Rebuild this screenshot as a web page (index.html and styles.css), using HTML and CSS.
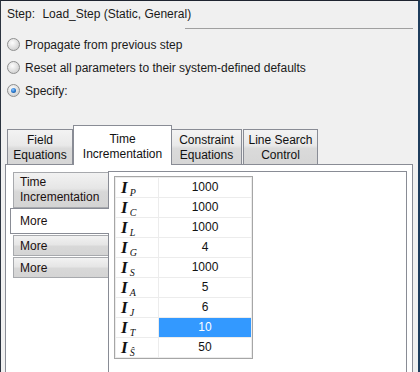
FILE: index.html
```html
<!DOCTYPE html>
<html lang="en">
<head>
    <meta charset="UTF-8">
    <title>Edit Step</title>
    <link rel="stylesheet" href="styles.css">
</head>
<body>
    <div class="window">
        <div class="step-row">
            <span class="step-label">Step:</span>
            <span>Load_Step (Static, General)</span>
        </div>
        <div class="rule"></div>

        <div class="options">
            <label class="option"><span class="radio"></span>Propagate from previous step</label>
            <label class="option"><span class="radio"></span>Reset all parameters to their system-defined defaults</label>
            <label class="option"><span class="radio checked"></span>Specify:</label>
        </div>

        <div class="tabs">
            <div class="tab tab-field">Field<br>Equations</div>
            <div class="tab tab-time active">Time<br>Incrementation</div>
            <div class="tab tab-constraint">Constraint<br>Equations</div>
            <div class="tab tab-search">Line Search<br>Control</div>
        </div>

        <div class="panel">
            <div class="side-tabs">
                <div class="side-tab tall">Time<br>Incrementation</div>
                <div class="side-tab active">More</div>
                <div class="side-tab">More</div>
                <div class="side-tab">More</div>
            </div>
            <div class="inner">
                <div class="params">
                    <div class="sym"><i>I</i><sub>P</sub></div><div class="val">1000</div>
                    <div class="sym"><i>I</i><sub>C</sub></div><div class="val">1000</div>
                    <div class="sym"><i>I</i><sub>L</sub></div><div class="val">1000</div>
                    <div class="sym"><i>I</i><sub>G</sub></div><div class="val">4</div>
                    <div class="sym"><i>I</i><sub>S</sub></div><div class="val">1000</div>
                    <div class="sym"><i>I</i><sub>A</sub></div><div class="val">5</div>
                    <div class="sym"><i>I</i><sub>J</sub></div><div class="val">6</div>
                    <div class="sym"><i>I</i><sub>T</sub></div><div class="val selected">10</div>
                    <div class="sym"><i>I</i><sub>Ŝ</sub></div><div class="val">50</div>
                </div>
            </div>
        </div>
    </div>
</body>
</html>
```

FILE: styles.css
```css
body {
    margin: 0;
    background: #f0f0f0;
    font-family: "Liberation Sans", Arial, sans-serif;
    font-size: 12px;
    color: #1a1a1a;
    overflow: hidden;
}
.window {
    width: 417px;
    height: 371px;
    border-top: 1px solid #1e2430;
    border-left: 1px solid #2c3440;
    border-right: 2px solid #1d3c5c;
    overflow: hidden;
    display: flex;
    flex-direction: column;
}
.step-row {
    height: 27px;
    line-height: 27px;
    padding-left: 6px;
}
.step-label {
    margin-right: 4px;
}
.rule {
    height: 1px;
    background: #a0a0a0;
    margin: 0 5px 0 184px;
}
.options {
    padding-top: 4px;
}
.option {
    display: flex;
    align-items: center;
    height: 23px;
    padding-left: 6px;
}
.radio {
    position: relative;
    width: 11px;
    height: 11px;
    border: 1px solid #8e8f8f;
    border-radius: 50%;
    background: radial-gradient(circle at 40% 35%, #fdfdfd 0%, #e4e4e4 45%, #cfcfcf 80%, #e9e9e9 100%);
    margin-right: 5px;
}
.radio.checked::after {
    content: "";
    position: absolute;
    left: 3px;
    top: 3px;
    width: 5px;
    height: 5px;
    border-radius: 50%;
    background: radial-gradient(circle at 40% 35%, #8cc4ff 0%, #2a7bd1 50%, #0b3f7a 100%);
}
.tabs {
    display: flex;
    align-items: flex-end;
    height: 39px;
    margin-top: 23px;
    padding-left: 6px;
}
.tab {
    height: 31px;
    padding-top: 3px;
    box-sizing: content-box;
    border: 1px solid #898c95;
    border-bottom: none;
    background: linear-gradient(#f3f3f3, #e9e9e9 45%, #dadada 55%, #d6d6d6);
    text-align: center;
    line-height: 15px;
    color: #111;
}
.tab-field {
    width: 64px;
}
.tab-time {
    width: 97px;
}
.tab-constraint {
    width: 69px;
    border-left: none;
}
.tab-search {
    width: 73px;
    margin-left: 1px;
}
.tab.active {
    height: 33px;
    padding-top: 6px;
    background: #fff;
    margin-bottom: -1px;
    position: relative;
    z-index: 1;
}
.panel {
    flex: 1;
    margin: 0 5px 0 4px;
    border: 1px solid #898c95;
    border-bottom: none;
    background: #fff;
    display: flex;
    padding: 6px 5px 0 7px;
}
.side-tabs {
    width: 95px;
    padding-top: 1px;
}
.side-tab {
    height: 19px;
    line-height: 20px;
    padding-left: 6px;
    border: 1px solid #a7a9ad;
    border-right: none;
    background: linear-gradient(#f2f2f2, #e6e6e6 45%, #d8d8d8 55%, #d4d4d4);
    margin-top: 1px;
    color: #1a1010;
}
.side-tab.tall {
    height: 34px;
    line-height: 15px;
    padding-top: 0;
    display: flex;
    flex-direction: column;
    justify-content: center;
    margin-top: 0;
}
.side-tab.active {
    height: 24px;
    line-height: 25px;
    margin: 0 -1px 0 -3px;
    padding-left: 9px;
    background: #fff;
    border-color: #898c95;
    position: relative;
    z-index: 1;
}
.inner {
    flex: 1;
    border: 1px solid #898c95;
    border-bottom: none;
    background: #fff;
    padding: 4px 0 0 5px;
}
.params {
    display: grid;
    grid-template-columns: 42px 92px;
    grid-auto-rows: 19px;
    gap: 1px;
    padding: 1px;
    width: 135px;
    border: 1px solid #a6a6a6;
    background: #ececec;
}
.sym, .val {
    background: #fff;
}
.sym {
    padding-left: 5px;
    font-family: "Liberation Serif", "Times New Roman", serif;
    color: #111;
    white-space: nowrap;
}
.sym i {
    font-size: 17px;
    font-weight: bold;
    line-height: 19px;
}
.sym sub {
    font-style: italic;
    font-size: 10px;
    vertical-align: -3px;
    margin-left: 2px;
}
.val {
    text-align: center;
    line-height: 19px;
    color: #111;
}
.val.selected {
    background: #3399ff;
    color: #fff;
}
```
